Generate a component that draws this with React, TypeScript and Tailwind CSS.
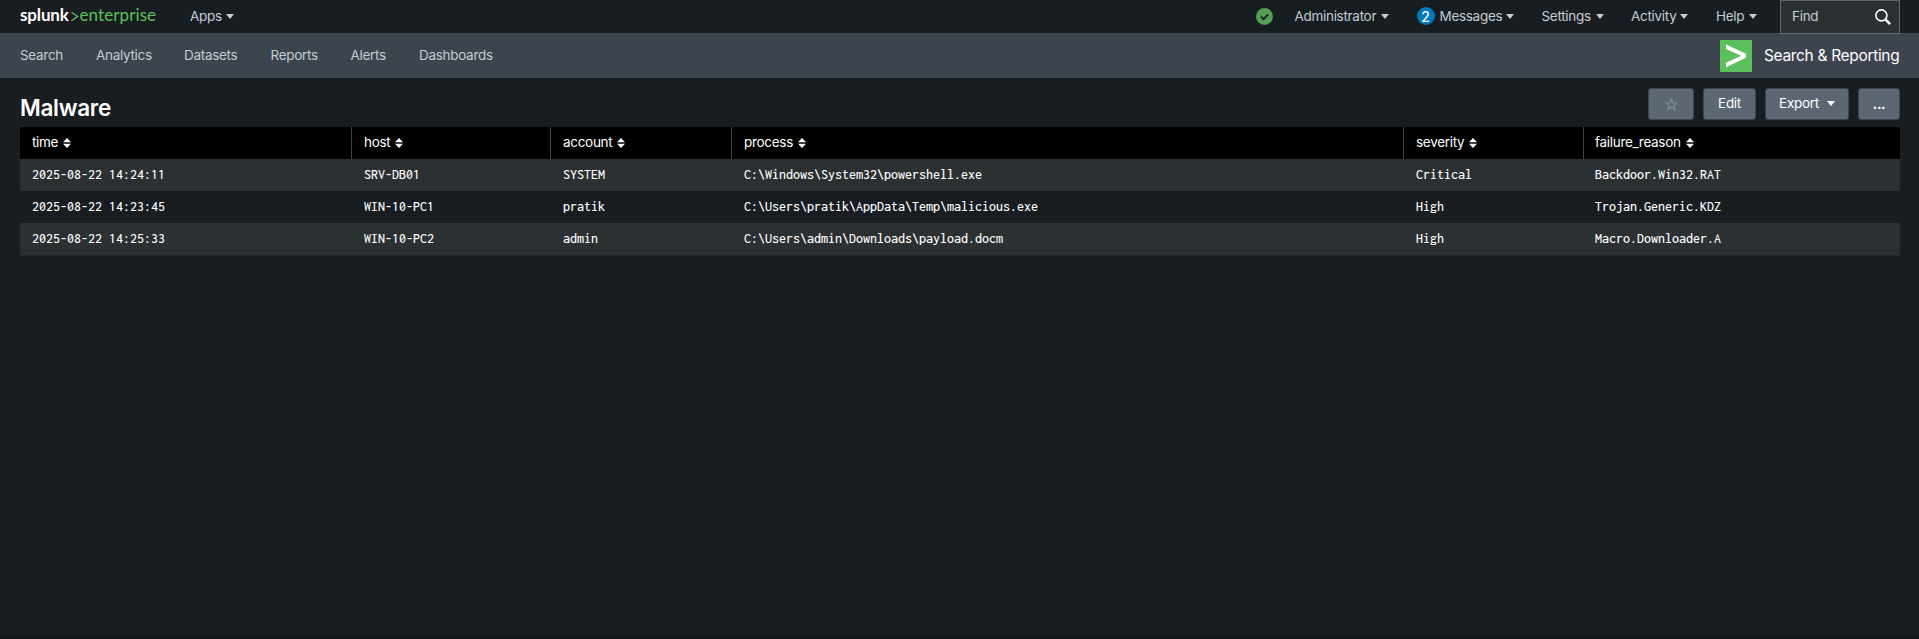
import React from "react";

const navLinks = [
  { label: "Search", width: "w-[76px]" },
  { label: "Analytics", width: "w-[88px]" },
  { label: "Datasets", width: "w-[86.5px]" },
  { label: "Reports", width: "w-[80px]" },
  { label: "Alerts", width: "w-[68.5px]" },
  { label: "Dashboards", width: "w-[90px]" },
];

const columns = [
  { key: "time", width: "w-[331px]" },
  { key: "host", width: "w-[199px]" },
  { key: "account", width: "w-[181px]" },
  { key: "process", width: "w-[672px]" },
  { key: "severity", width: "w-[180px]" },
  { key: "failure_reason", width: "w-[317px]" },
];

const rows = [
  ["2025-08-22 14:24:11", "SRV-DB01", "SYSTEM", "C:\\Windows\\System32\\powershell.exe", "Critical", "Backdoor.Win32.RAT"],
  ["2025-08-22 14:23:45", "WIN-10-PC1", "pratik", "C:\\Users\\pratik\\AppData\\Temp\\malicious.exe", "High", "Trojan.Generic.KDZ"],
  ["2025-08-22 14:25:33", "WIN-10-PC2", "admin", "C:\\Users\\admin\\Downloads\\payload.docm", "High", "Macro.Downloader.A"],
];

function Caret() {
  return (
    <svg className="h-[5px] w-2 shrink-0" viewBox="0 0 8 5" fill="currentColor">
      <path d="M0 0h8L4 5z" />
    </svg>
  );
}

function SortIcon() {
  return (
    <svg className="h-[10px] w-2 shrink-0" viewBox="0 0 8 10" fill="currentColor">
      <path d="M4 0l4 4.300H0zM4 10L0 5.700h8z" />
    </svg>
  );
}

function Menu({ label, className, children }: { label: string; className: string; children?: React.ReactNode }) {
  return (
    <a className={`flex h-[33px] shrink-0 items-center justify-between pb-px ${className}`}>
      <span className="flex items-center gap-[5px]">
        {children}
        {label}
      </span>
      <Caret />
    </a>
  );
}

function Button({ className, children }: { className: string; children: React.ReactNode }) {
  return (
    <button
      className={`flex h-8 items-center justify-center rounded-[3px] border border-[#3c444d] bg-[#5c6773] text-white tracking-[-0.3px] ${className}`}
    >
      {children}
    </button>
  );
}

export default function App() {
  return (
    <div className="flex h-[639px] w-full flex-col overflow-hidden border-b-2 border-[#15161d] bg-[#171d21] font-['Inter',sans-serif] text-[13.5px] tracking-[-0.3px] text-[#c3cbd4]">
      <header className="flex h-[33px] shrink-0 items-center pr-[19px] pl-5">
        <div className="flex w-[170px] items-center pb-[3px] font-['Lato',sans-serif] text-[17px] leading-[30px] tracking-normal [font-variant-ligatures:none]">
          <span className="w-[50.5px] font-bold tracking-[-0.15px] text-white">splunk</span>
          <svg className="mt-[3px] mr-[1px] h-[11px] w-2" viewBox="0 0 8 11" fill="none" stroke="#5cc05c" strokeWidth="1.3">
            <path d="M.5 1.200l6.300 4.200L.5 9.800" />
          </svg>
          <span className="tracking-[0.1px] text-[#5cc05c]">enterprise</span>
        </div>
        <Menu label="Apps" className="w-[44px]" />
        <div className="flex-1" />
        <svg className="mr-[22px] mb-[1px] size-[17px]" viewBox="0 0 17 17">
          <circle cx="8.5" cy="8.5" r="8.5" fill="#53a051" />
          <path d="M5 8.600l2.500 2.500 4.600-4.800" fill="none" stroke="#171d21" strokeWidth="1.8" />
        </svg>
        <Menu label="Administrator" className="mr-[28px] w-[94px]" />
        <Menu label="Messages" className="mr-[28px] w-[97px]">
          <span className="flex size-[18px] items-center justify-center rounded-full bg-[#007abd] text-[14px] font-medium text-white">2</span>
        </Menu>
        <Menu label="Settings" className="mr-[27.5px] w-[62px]" />
        <Menu label="Activity" className="mr-[28px] w-[57px]" />
        <Menu label="Help" className="mr-[23px] w-[41px]" />
        <div className="z-10 mt-px flex h-[34px] w-[120px] items-center justify-between border border-[#5c6773] bg-[#2b3033] pr-2 pl-[11px]">
          <span className="pb-px">Find</span>
          <svg className="size-4" viewBox="0 0 16 16" fill="none" stroke="#fff">
            <circle cx="6.4" cy="6.4" r="5.5" strokeWidth="1.6" />
            <path d="M10.600 10.600l4.500 4.500" strokeWidth="2.6" />
          </svg>
        </div>
      </header>

      <nav className="flex h-[45px] shrink-0 items-center bg-[#3c444d] pr-[19px] pl-5">
        {navLinks.map((link) => (
          <a key={link.label} className={link.width}>
            {link.label}
          </a>
        ))}
        <div className="ml-auto flex items-center">
          <svg className="size-8" viewBox="0 0 32 32">
            <rect width="32" height="32" fill="#5cc05c" />
            <path d="M6 4.500l20 9.300v4L6 27.200v-4.400l15.200-7L6 8.900z" fill="#fff" />
          </svg>
          <span className="w-[148px] pt-px pl-3 text-[15.5px] whitespace-nowrap tracking-[-0.33px] text-white">Search &amp; Reporting</span>
        </div>
      </nav>

      <main className="flex flex-col pr-[19px] pl-5">
        <div className="flex h-[49px] items-start justify-between pt-[10px]">
          <h1 className="pt-[3px] text-[22.5px] leading-[33px] font-semibold tracking-[-0.3px] text-white">Malware</h1>
          <div className="flex">
            <Button className="mr-[9px] w-[46px]">
              <svg className="size-[13px]" viewBox="0 0 14 14" fill="none" stroke="#818d99" strokeWidth="1.2">
                <path d="M7 1.300l1.500 4.100h4.300L9.400 8l1.300 4.400L7 9.800l-3.700 2.600L4.600 8 1.200 5.400h4.300z" />
              </svg>
            </Button>
            <Button className="mr-[9px] w-[53px] pb-[2px]">Edit</Button>
            <Button className="mr-[9px] w-[84px] gap-2 pb-[2px]">
              Export
              <Caret />
            </Button>
            <Button className="w-[42px] pt-px font-bold">...</Button>
          </div>
        </div>

        <table className="w-[1880px] table-fixed border-separate border-spacing-0 text-left text-white">
          <thead>
            <tr className="h-8 bg-black">
              {columns.map((column) => (
                <th
                  key={column.key}
                  className={`border-l border-[#3c444d] p-0 pl-3 font-normal first:border-l-0 last:pl-[11px] ${column.width}`}
                >
                  <span className="flex items-center gap-[5px] pb-px">
                    {column.key}
                    <SortIcon />
                  </span>
                </th>
              ))}
            </tr>
          </thead>
          <tbody className="font-['Inconsolata','Noto_Sans_Mono_CJK_JP','Liberation_Mono',monospace] text-[14px] font-medium tracking-normal">
            {rows.map((row) => (
              <tr key={row[0]} className="h-8 odd:bg-[#2b3033]">
                {row.map((cell) => (
                  <td key={cell} className="p-0 pb-[2px] pl-[13px] whitespace-nowrap first:pl-3 last:pl-3">
                    {cell}
                  </td>
                ))}
              </tr>
            ))}
          </tbody>
        </table>
        <div className="h-px bg-[#22282c]" />
      </main>
    </div>
  );
}
